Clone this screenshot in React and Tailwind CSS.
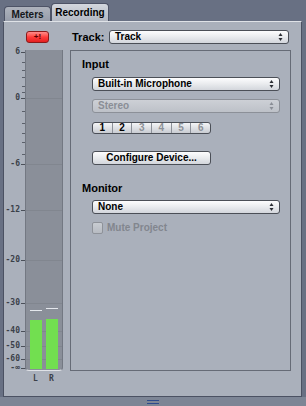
import React from "react";

const popupCls =
  "relative flex items-center h-[14px] rounded-[3px] border border-[#4b4f57] bg-gradient-to-b from-[#fdfdfe] via-[#e9ebee] to-[#d3d6dc] text-[10px] font-bold text-black leading-none";

const Arrows = ({ color = "#2a2d33" }) => (
  <svg className="absolute right-[5px] top-1/2 -translate-y-1/2" width="5" height="9" viewBox="0 0 5 9">
    <path d="M2.5 0.5 L4.5 3.5 L0.5 3.5 Z" fill={color} />
    <path d="M2.5 8.5 L4.5 5.5 L0.5 5.5 Z" fill={color} />
  </svg>
);

const Popup = ({ label, className = "" }) => (
  <div className={`${popupCls} ${className}`}>
    <span className="pl-[5px]">{label}</span>
    <Arrows />
  </div>
);

// meter scale, y values measured from the top of the channel
const majors = [
  { t: "6", y: 2 },
  { t: "0", y: 48 },
  { t: "-6", y: 114 },
  { t: "-12", y: 160 },
  { t: "-20", y: 210 },
  { t: "-30", y: 253 },
  { t: "-40", y: 281 },
  { t: "-50", y: 296 },
  { t: "-60", y: 309 },
  { t: "-∞", y: 318 },
];
const minors = [12, 20, 27, 36, 42, 61, 73, 83, 92, 104];
const mono = { fontFamily: '"DejaVu Sans Mono", monospace' };

const Meter = () => (
  <div className="relative mt-[7px] h-[330px] w-[66px]">
    {majors.map((m) => (
      <React.Fragment key={m.t}>
        <div
          className="absolute right-[50px] text-[8px] leading-none font-bold text-[#3b4049]"
          style={{ top: m.y - 4, ...mono }}
        >
          {m.t}
        </div>
        <div className="absolute left-[17px] h-px w-[5px] bg-[#4a4f58]" style={{ top: m.y }} />
      </React.Fragment>
    ))}
    {minors.map((y) => (
      <div key={y} className="absolute left-[18px] h-px w-[4px] bg-[#5b606a]" style={{ top: y }} />
    ))}
    <div className="absolute left-[21px] top-0 h-[321px] w-[38px] overflow-hidden rounded-b-[4px] border-x border-b border-x-[#737882] border-b-[#dfe2e7] bg-[#8a8f99]">
      {majors.slice(1, 9).map((m) => (
        <div key={m.t} className="absolute left-0 h-px w-full bg-[#81868f]" style={{ top: m.y }} />
      ))}
      <div className="absolute left-[4px] top-[260px] h-px w-[12px] bg-[#e4e7ec]" />
      <div className="absolute left-[20px] top-[258px] h-px w-[12px] bg-[#e4e7ec]" />
      <div className="absolute left-[4px] top-[270px] h-[49px] w-[12px] bg-[#72df50]" />
      <div className="absolute left-[20px] top-[269px] h-[50px] w-[12px] bg-[#72df50]" />
    </div>
    <div className="absolute left-[29px] top-[325px] text-[8px] font-bold leading-none text-[#3b4049]" style={mono}>
      L
    </div>
    <div className="absolute left-[45px] top-[325px] text-[8px] font-bold leading-none text-[#3b4049]" style={mono}>
      R
    </div>
  </div>
);

export default function App() {
  return (
    <div
      className="flex h-[406px] w-[306px] flex-col bg-[#687083]"
      style={{ fontFamily: '"Liberation Sans", Arial, sans-serif' }}
    >
      {/* tabs */}
      <div className="flex h-[21px] items-end pl-[4px]">
        <div className="flex h-[15px] w-[47px] items-center justify-center rounded-t-[4px] border border-b-0 border-[#4d5366] bg-gradient-to-b from-[#aeb3bd] to-[#979daa] text-[10px] font-bold text-[#15171b]">
          Meters
        </div>
        <div className="flex h-[18px] w-[58px] items-center justify-center rounded-t-[4px] border border-b-0 border-[#4d5366] bg-gradient-to-b from-[#d3d7de] to-[#b3b8c2] text-[10px] font-bold text-black">
          Recording
        </div>
      </div>

      {/* panel */}
      <div className="ml-[3px] flex h-[376px] w-[299px] border border-[#4b5162] border-t-[#dfe2e7] bg-[#aab0bb]">
        <div className="flex w-[66px] flex-col">
          <div className="ml-[22px] mt-[9px] flex h-[12px] w-[23px] items-center justify-center rounded-[3px] border border-[#8a1a1a] bg-gradient-to-b from-[#ff8a8a] via-[#ff3b3b] to-[#e42020] text-[8px] font-bold leading-none text-[#5a0000]">
            +!
          </div>
          <Meter />
        </div>

        <div className="flex flex-1 flex-col pr-[10px]">
          <div className="mt-[8px] flex h-[14px] items-center">
            <span className="w-[39px] pl-[2px] text-[11px] font-bold text-black">Track:</span>
            <Popup label="Track" className="w-[180px]" />
          </div>

          <div className="mt-[6px] flex h-[321px] flex-col border border-[#666b76] pl-[11px]">
            <div className="mt-[7px] h-[13px] text-[11px] font-bold leading-[13px] text-black">Input</div>
            <div className="ml-[10px] mt-[6px] flex w-[188px] flex-col">
              <Popup label="Built-in Microphone" />
              <div className="relative mt-[8px] flex h-[14px] items-center rounded-[3px] border border-[#8c9098] bg-gradient-to-b from-[#cdd0d6] to-[#bdc1c8] text-[10px] font-bold leading-none text-[#8a8e96]">
                <span className="pl-[5px]">Stereo</span>
                <Arrows color="#8a8e96" />
              </div>
              <div className="mt-[9px] flex h-[12px] w-[119px] overflow-hidden rounded-[3px] border border-[#4b4f57] bg-gradient-to-b from-[#f4f5f7] to-[#c9ccd2] text-[10px] font-bold leading-none">
                {["1", "2", "3", "4", "5", "6"].map((n, i) => (
                  <div
                    key={n}
                    className={`flex flex-1 items-center justify-center ${i > 0 ? "border-l border-[#8c9098]" : ""} ${
                      i < 2 ? "text-black" : "text-[#8d9198]"
                    }`}
                  >
                    {n}
                  </div>
                ))}
              </div>
              <div className="mt-[17px] flex h-[14px] w-[119px] items-center justify-center rounded-[3px] border border-[#4b4f57] bg-gradient-to-b from-[#fdfdfe] via-[#e9ebee] to-[#d3d6dc] text-[10px] font-bold leading-none text-black">
                Configure Device...
              </div>
            </div>

            <div className="mt-[17px] h-[13px] text-[11px] font-bold leading-[13px] text-black">Monitor</div>
            <div className="ml-[10px] mt-[5px] flex w-[188px] flex-col">
              <Popup label="None" />
              <div className="mt-[8px] flex h-[12px] items-center gap-[4px]">
                <div className="h-[12px] w-[11px] rounded-[2px] border border-[#8e9299] bg-gradient-to-b from-[#c8ccd2] to-[#b7bbc2]" />
                <span className="text-[10px] font-bold leading-none text-[#82868e]">Mute Project</span>
              </div>
            </div>
          </div>
        </div>
      </div>

      {/* bottom bar with resize handle */}
      <div className="flex flex-1 items-center justify-center bg-[#7d8595]">
        <div className="flex w-[12px] flex-col gap-[2px]">
          <div className="h-px w-full bg-[#2d4a8c]" />
          <div className="h-px w-full bg-[#2d4a8c]" />
        </div>
      </div>
    </div>
  );
}
